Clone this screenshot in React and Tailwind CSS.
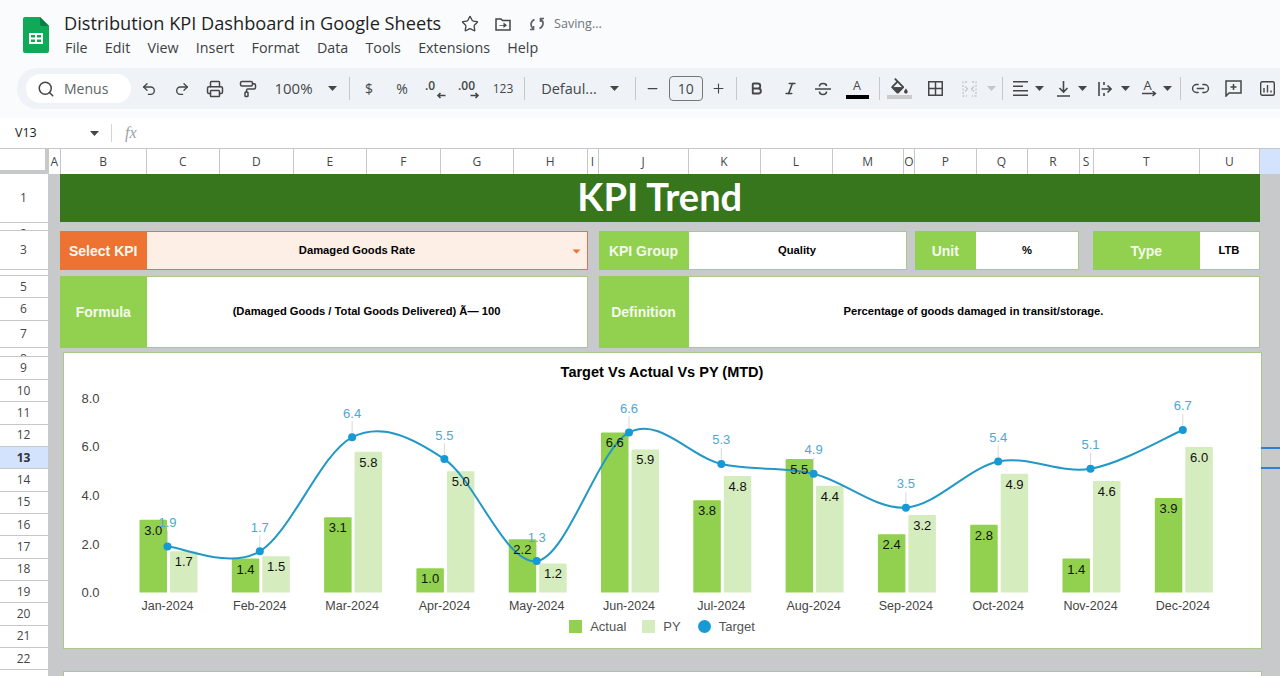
import { Search, Undo2, Redo2, Printer, PaintRoller, Star, Bold, Italic, Link2, Minus, Plus } from "lucide-react";

const menus = ["File", "Edit", "View", "Insert", "Format", "Data", "Tools", "Extensions", "Help"];

const columns = [
    { name: "A", w: "w-[12.5px]" },
    { name: "B", w: "w-[85.5px]" },
    { name: "C", w: "w-[73.5px]" },
    { name: "D", w: "w-[73.5px]" },
    { name: "E", w: "w-[73.5px]" },
    { name: "F", w: "w-[73.5px]" },
    { name: "G", w: "w-[73.5px]" },
    { name: "H", w: "w-[73.5px]" },
    { name: "I", w: "w-[11px]" },
    { name: "J", w: "w-[90px]" },
    { name: "K", w: "w-[72px]" },
    { name: "L", w: "w-[72px]" },
    { name: "M", w: "w-[71.5px]" },
    { name: "O", w: "w-[11px]" },
    { name: "P", w: "w-[61.5px]" },
    { name: "Q", w: "w-[51px]" },
    { name: "R", w: "w-[52px]" },
    { name: "S", w: "w-[14px]" },
    { name: "T", w: "w-[106.5px]" },
    { name: "U", w: "w-[59.5px]" },
];

// row 2, 4 and 8 are squeezed so the number gets clipped
const rows = [
    { n: 1, h: "h-[49px]" },
    { n: 2, h: "h-[8px]", clip: true },
    { n: 3, h: "h-[39px]" },
    { n: 4, h: "h-[6px]", clip: true },
    { n: 5, h: "h-[22px]" },
    { n: 6, h: "h-[23px]" },
    { n: 7, h: "h-[27px]" },
    { n: 8, h: "h-[9px]", clip: true },
    { n: 9, h: "h-[23px]" },
    ...[10, 11, 12, 13, 14, 15, 16, 17, 18, 19, 20, 21, 22, 23].map((n) => ({ n, h: "h-[22.33px]" })),
];

const months = [
    { label: "Jan-2024", actual: 3.0, py: 1.7, target: 1.9 },
    { label: "Feb-2024", actual: 1.4, py: 1.5, target: 1.7 },
    { label: "Mar-2024", actual: 3.1, py: 5.8, target: 6.4 },
    { label: "Apr-2024", actual: 1.0, py: 5.0, target: 5.5 },
    { label: "May-2024", actual: 2.2, py: 1.2, target: 1.3 },
    { label: "Jun-2024", actual: 6.6, py: 5.9, target: 6.6 },
    { label: "Jul-2024", actual: 3.8, py: 4.8, target: 5.3 },
    { label: "Aug-2024", actual: 5.5, py: 4.4, target: 4.9 },
    { label: "Sep-2024", actual: 2.4, py: 3.2, target: 3.5 },
    { label: "Oct-2024", actual: 2.8, py: 4.9, target: 5.4 },
    { label: "Nov-2024", actual: 1.4, py: 4.6, target: 5.1 },
    { label: "Dec-2024", actual: 3.9, py: 6.0, target: 6.7 },
];

const xOf = (i) => 167 + i * 92.3;
const yOf = (v) => 591.6 - v * 24.27;

function smoothPath(points) {
    let d = `M${points[0].x} ${points[0].y}`;
    for (let i = 0; i < points.length - 1; i++) {
        const p0 = points[Math.max(i - 1, 0)];
        const p1 = points[i];
        const p2 = points[i + 1];
        const p3 = points[Math.min(i + 2, points.length - 1)];
        const c1x = p1.x + (p2.x - p0.x) / 6;
        const c1y = p1.y + (p2.y - p0.y) / 6;
        const c2x = p2.x - (p3.x - p1.x) / 6;
        const c2y = p2.y - (p3.y - p1.y) / 6;
        d += ` C${c1x} ${c1y} ${c2x} ${c2y} ${p2.x} ${p2.y}`;
    }
    return d;
}

function Caret({ className = "" }) {
    return (
        <svg width="9" height="5" viewBox="0 0 9 5" className={className}>
            <path d="M0 0h9L4.5 5z" fill="currentColor" />
        </svg>
    );
}

function Box({ w, className = "", children }) {
    return <div className={`flex items-center justify-center shrink-0 h-full ${w} ${className}`}>{children}</div>;
}

function Sep({ className = "" }) {
    return <div className={`w-px h-[23px] bg-[#c7c7c7] shrink-0 ${className}`} />;
}

function SheetsLogo() {
    return (
        <svg width="26" height="36" viewBox="0 0 26 36" className="shrink-0">
            <path d="M2 0h15l9 9v25a2 2 0 0 1-2 2H2a2 2 0 0 1-2-2V2a2 2 0 0 1 2-2z" fill="#0fa958" />
            <path d="M17 0l9 9h-7a2 2 0 0 1-2-2z" fill="#0a7d41" />
            <path d="M6 16h14v11H6z M8 18v2.5h4V18z M14 18v2.5h4V18z M8 22.5V25h4v-2.5z M14 22.5V25h4v-2.5z" fill="#fff" fillRule="evenodd" />
        </svg>
    );
}

function Toolbar() {
    return (
        <div className="flex items-center h-[41px] ml-[17px] pl-[9px] bg-[#eff3f8] rounded-l-[20px] text-[#444746] overflow-hidden">
            <div className="flex items-center w-[105px] h-[29px] bg-white rounded-full shrink-0 pl-[11px]">
                <Search size={18} strokeWidth={2} />
                <span className="ml-[9px] text-[14px] text-[#5f6368]">Menus</span>
            </div>
            <Box w="w-[33px]" className="ml-[1px]"><Undo2 size={16} strokeWidth={2} /></Box>
            <Box w="w-[33px]"><Redo2 size={16} strokeWidth={2} /></Box>
            <Box w="w-[33px]"><Printer size={18} strokeWidth={2} /></Box>
            <Box w="w-[33px]"><PaintRoller size={18} strokeWidth={2} /></Box>
            <Box w="w-[59px]" className="text-[15px]">100%</Box>
            <Box w="w-[18px]"><Caret /></Box>
            <Sep className="ml-[8px]" />
            <Box w="w-[33px]" className="ml-[2.5px] text-[14px]">$</Box>
            <Box w="w-[33px]" className="text-[14px]">%</Box>
            <Box w="w-[33px]">
                <div className="relative w-[20px] h-[20px] text-[12px] font-semibold leading-[14px]">
                    .0
                    <svg width="10" height="7" viewBox="0 0 10 7" className="absolute right-[-1px] bottom-0">
                        <path d="M9.5 3.5H2M4.5 1 2 3.5 4.5 6" fill="none" stroke="currentColor" strokeWidth="1.6" />
                    </svg>
                </div>
            </Box>
            <Box w="w-[33px]" className="ml-[1px]">
                <div className="relative w-[22px] h-[20px] text-[12px] font-semibold leading-[14px]">
                    .00
                    <svg width="10" height="7" viewBox="0 0 10 7" className="absolute right-0 bottom-0">
                        <path d="M.5 3.5H8M5.5 1 8 3.5 5.5 6" fill="none" stroke="currentColor" strokeWidth="1.6" />
                    </svg>
                </div>
            </Box>
            <Box w="w-[33px]" className="ml-[1px] text-[12px]">123</Box>
            <Sep className="ml-[4.5px]" />
            <Box w="w-[56px]" className="ml-[16px] text-[14.5px] whitespace-nowrap">Defaul...</Box>
            <Box w="w-[18px]" className="ml-[8px]"><Caret /></Box>
            <Sep className="ml-[12px]" />
            <Box w="w-[24px]" className="ml-[4px]"><Minus size={15} strokeWidth={2} /></Box>
            <div className="flex items-center justify-center w-[34.5px] h-[25px] ml-[4.5px] shrink-0 border border-[#747775] rounded-[4px] text-[14px]">10</div>
            <Box w="w-[24px]" className="ml-[3px]"><Plus size={15} strokeWidth={1.8} /></Box>
            <Sep className="ml-[6px]" />
            <Box w="w-[33px]" className="ml-[2.5px]"><Bold size={15} strokeWidth={3} /></Box>
            <Box w="w-[33px]" className="ml-[1px]"><Italic size={15} strokeWidth={2.6} /></Box>
            <Box w="w-[33px]">
                <svg width="18" height="18" viewBox="0 0 18 18" fill="none" stroke="currentColor" strokeWidth="1.6">
                    <path d="M1 9h16M5.5 6.5C5.5 4.5 7 3.5 9 3.5s3.5 1 3.5 2.5M5.5 11.5c0 2 1.5 3 3.5 3s3.5-1 3.5-3" />
                </svg>
            </Box>
            <Box w="w-[33px]" className="ml-[1px]">
                <div className="flex flex-col items-center w-[24px]">
                    <span className="text-[12.5px] leading-[14px] h-[16px]">A</span>
                    <div className="w-[23px] h-[4px] bg-black" />
                </div>
            </Box>
            <Sep className="ml-[5px]" />
            <Box w="w-[33px]" className="ml-[3px]">
                <div className="flex flex-col items-center w-[25px]">
                    <svg width="19" height="16" viewBox="2 0 20 17.5" fill="currentColor">
                        <path d="M16.56 8.94 7.62 0 6.21 1.41l2.38 2.38-5.15 5.15c-.59.59-.59 1.54 0 2.12l5.5 5.5c.29.29.68.44 1.06.44s.77-.15 1.06-.44l5.5-5.5c.59-.58.59-1.53 0-2.12zM10 5.21 14.79 10H5.21z" />
                        <path d="M5 10h10l-5 5zM19 11.5s-2 2.17-2 3.5c0 1.1.9 2 2 2s2-.9 2-2c0-1.33-2-3.5-2-3.5z" />
                    </svg>
                    <div className="w-[25px] h-[4px] mt-[1px] bg-[#c9cbcd]" />
                </div>
            </Box>
            <Box w="w-[33px]" className="ml-[3px]">
                <svg width="15" height="15" viewBox="0 0 15 15" fill="none" stroke="currentColor" strokeWidth="1.5">
                    <path d="M.75.75h13.5v13.5H.75zM7.5.75v13.5M.75 7.5h13.5" />
                </svg>
            </Box>
            <Box w="w-[33px]" className="ml-[1px] text-[#c4c7c9]">
                <svg width="15" height="16" viewBox="0 0 15 16" fill="none" stroke="currentColor" strokeWidth="1.3" strokeDasharray="2 1.5">
                    <path d="M5 1H1v14h4M10 1h4v14h-4" />
                    <path d="M3 5.5 5.5 8 3 10.5M12 5.5 9.5 8 12 10.5" strokeDasharray="none" />
                </svg>
            </Box>
            <Box w="w-[11px]" className="text-[#c4c7c9]"><Caret /></Box>
            <Sep className="ml-[5.5px]" />
            <Box w="w-[20px]" className="ml-[7px]">
                <svg width="15" height="15" viewBox="0 0 15 15" fill="currentColor">
                    <path d="M0 0h15v1.5H0zM0 4.5h10V6H0zM0 9h15v1.5H0zM0 13.5h15V15H0z" />
                </svg>
            </Box>
            <Box w="w-[12px]" className="ml-[3px]"><Caret /></Box>
            <Box w="w-[20px]" className="ml-[8px]">
                <svg width="13" height="16" viewBox="0 0 13 16" fill="none" stroke="currentColor" strokeWidth="1.6">
                    <path d="M6.5 0v10.5M2.5 7l4 4 4-4M0 15h13" />
                </svg>
            </Box>
            <Box w="w-[12px]" className="ml-[3px]"><Caret /></Box>
            <Box w="w-[20px]" className="ml-[7px]">
                <svg width="14" height="14" viewBox="0 0 14 14" fill="none" stroke="currentColor" strokeWidth="1.6">
                    <path d="M1 0v14M6 0v3M6 11v3M3.5 7H13M9.5 3.5 13 7l-3.5 3.5" />
                </svg>
            </Box>
            <Box w="w-[12px]" className="ml-[4px]"><Caret /></Box>
            <Box w="w-[20px]" className="ml-[8px]">
                <div className="relative w-[15px] h-[18px]">
                    <span className="absolute left-[2px] top-[-2px] text-[13px] leading-[15px]">A</span>
                    <svg width="15" height="7" viewBox="0 0 15 7" className="absolute left-0 bottom-0" fill="none" stroke="currentColor" strokeWidth="1.4">
                        <path d="M0 2.5h13.5M10.5 0 13.5 2.5 10.5 5" />
                    </svg>
                </div>
            </Box>
            <Box w="w-[12px]" className="ml-[2px]"><Caret /></Box>
            <Sep className="ml-[7px]" />
            <Box w="w-[32px]" className="ml-[3px]"><Link2 size={19} strokeWidth={1.8} /></Box>
            <Box w="w-[32px]" className="ml-[1px]">
                <svg width="17" height="17" viewBox="0 0 17 17" fill="none" stroke="currentColor" strokeWidth="1.5">
                    <path d="M1 1h15v12H4l-3 3zM8.5 4v6M5.5 7h6" />
                </svg>
            </Box>
            <Box w="w-[32px]" className="ml-[2px]">
                <svg width="15" height="15" viewBox="0 0 15 15" fill="none" stroke="currentColor" strokeWidth="1.4">
                    <rect x=".7" y=".7" width="13.6" height="13.6" rx="1.5" />
                    <path d="M4 7v4.5M7.5 4v7.5M11 9.5v2" />
                </svg>
            </Box>
        </div>
    );
}

function Label({ w, children, tone = "bg-[#92d14f]" }) {
    return (
        <div className={`flex items-center justify-center shrink-0 h-full pt-[1px] ${w} ${tone} text-[14px] font-bold text-[#f4f9ec]`}>
            {children}
        </div>
    );
}

function Value({ w, children }) {
    return (
        <div className={`flex items-center justify-center shrink-0 h-full ${w} bg-white border border-l-0 border-[#a9c98b] text-[11.2px] font-bold text-black`}>
            {children}
        </div>
    );
}

function TrendChart() {
    const points = months.map((m, i) => ({ x: xOf(i), y: yOf(m.target) }));
    return (
        <svg width="1197" height="228" viewBox="63.5 385 1197 228" className="shrink-0 font-['Liberation_Sans',Arial,sans-serif]">
            {[0, 2, 4, 6, 8].map((v) => (
                <text key={v} x="81" y={yOf(v) + 4.5} fontSize="13" fill="#444">{v.toFixed(1)}</text>
            ))}
            {months.map((m, i) => {
                const c = xOf(i);
                const aTop = yOf(m.actual);
                const pTop = yOf(m.py);
                return (
                    <g key={m.label}>
                        <path d={`M${c - 28} 591.6V${aTop + 1}q0-1 1-1h25.5q1 0 1 1V591.6z`} fill="#92d14f" />
                        <path d={`M${c + 2.5} 591.6V${pTop + 1}q0-1 1-1h25.5q1 0 1 1V591.6z`} fill="#d5ecbe" />
                        <line x1={c} x2={c} y1={yOf(m.target) - 4} y2={yOf(m.target) - 16} stroke="#d9d9d9" />
                        <text x={c} y="608.5" fontSize="12.5" fill="#444" textAnchor="middle">{m.label}</text>
                    </g>
                );
            })}
            <path d={smoothPath(points)} fill="none" stroke="#2298c6" strokeWidth="2" />
            {points.map((p, i) => (
                <circle key={i} cx={p.x} cy={p.y} r="4" fill="#159ad6" />
            ))}
            {months.map((m, i) => {
                const c = xOf(i);
                return (
                    <g key={m.label} fontSize="13" textAnchor="middle">
                        <text x={c - 14.3} y={yOf(m.actual) + 15} fill="#111">{m.actual.toFixed(1)}</text>
                        <text x={c + 16.3} y={yOf(m.py) + 15} fill="#111">{m.py.toFixed(1)}</text>
                        <text x={c} y={yOf(m.target) - 19.5} fill="#4ea8d2">{m.target.toFixed(1)}</text>
                    </g>
                );
            })}
        </svg>
    );
}

export default function App() {
    return (
        <div className="relative flex flex-col w-[1280px] h-[676px] overflow-hidden bg-white font-['Open_Sans',sans-serif]">
            {/* top bar */}
            <div className="bg-[#f9fbfd] h-[118px] shrink-0">
                <div className="flex h-[68px] pl-[23px] pt-[17px]">
                    <SheetsLogo />
                    <div className="ml-[15px] -mt-[7px]">
                        <div className="flex items-center h-[28px]">
                            <span className="w-[397px] text-[18.2px] text-[#1f1f1f] whitespace-nowrap">Distribution KPI Dashboard in Google Sheets</span>
                            <Star size={18} strokeWidth={1.8} className="text-[#444746]" />
                            <svg width="16" height="14" viewBox="0 0 16 14" fill="none" className="ml-[16px] text-[#444746]">
                                <path d="M1 2h5l1.5 1.5H15V13H1z" stroke="currentColor" strokeWidth="1.5" />
                                <path d="M4.5 8h4V5.5L12 8.25 8.5 11V8.8h-4z" fill="currentColor" />
                            </svg>
                            <svg width="14" height="16" viewBox="0 0 14 16" fill="none" stroke="#5f6368" strokeWidth="1.7" className="ml-[19px]">
                                <path d="M4.5 3.5C2.5 4.5 1 6 1 8.5c0 2 1 3.5 2.5 4.5M3.5 10v3.5H0M9.5 12.5C11.5 11.5 13 10 13 7.500c0-2-1-3.500-2.500-4.500M10.500 6V2.500H14" />
                            </svg>
                            <span className="ml-[10px] text-[12.6px] text-[#70757a]">Saving...</span>
                        </div>
                        <div className="flex gap-[17.2px] pl-[1px] text-[14.3px] leading-[20px] text-[#3c4043]">
                            {menus.map((m) => <span key={m}>{m}</span>)}
                        </div>
                    </div>
                </div>
                <Toolbar />
            </div>

            {/* formula bar */}
            <div className="flex items-center h-[30px] shrink-0 bg-white text-[#444746]">
                <span className="w-[86px] pl-[15px] text-[12.5px] text-[#222]">V13</span>
                <Caret className="ml-[3.5px]" />
                <div className="w-px h-[18px] ml-[12.5px] bg-[#d4d4d4]" />
                <span className="ml-[13px] text-[16px] italic text-[#9aa0a6] font-['Liberation_Serif',serif]">fx</span>
            </div>

            {/* column letters */}
            <div className="flex h-[26px] shrink-0 border-t border-[#c7c7c7] text-[12px] text-[#444746]">
                <div className="w-[48.5px] shrink-0 bg-white border-r-4 border-b-4 border-[#c7c8ca]" />
                {columns.map((c) => (
                    <div key={c.name} className={`flex items-center justify-center shrink-0 ${c.w} border-r border-[#c7c7c7]`}>{c.name}</div>
                ))}
                <div className="flex-1 bg-[#d3e3fd]" />
            </div>

            <div className="flex flex-1 min-h-0">
                {/* row numbers */}
                <div className="flex flex-col w-[48px] shrink-0 bg-white text-[12px] text-[#444746]">
                    {rows.map((r) => (
                        <div
                            key={r.n}
                            className={`flex justify-center shrink-0 overflow-hidden border-b border-[#c7c7c7] pr-[1px] ${r.h} ${r.clip ? "items-start pt-[4px] leading-[14px]" : "items-center"} ${r.n === 13 ? "bg-[#d3e3fd] font-bold text-[#303134]" : ""}`}
                        >
                            {r.n}
                        </div>
                    ))}
                </div>

                {/* dashboard */}
                <div className="flex-1 min-w-0 bg-[#c8c9cb] pl-[12px] font-['Liberation_Sans',Arial,sans-serif]">
                    <div className="flex items-center justify-center w-[1199.5px] h-[48px] pb-[3px] bg-[#38761d] text-[38px] font-bold text-white font-['Lato',sans-serif]">
                        KPI Trend
                    </div>

                    <div className="flex w-[1199.5px] h-[39px] mt-[9px]">
                        <Label w="w-[86.5px]" tone="bg-[#ed7333]">Select KPI</Label>
                        <div className="relative flex items-center justify-center shrink-0 w-[441px] h-full pr-[19px] bg-[#fdeee6] border border-l-0 border-[#e0754a] text-[11.2px] font-bold text-black">
                            Damaged Goods Rate
                            <Caret className="absolute right-[6px] top-[17px] text-[#ed7333] scale-90" />
                        </div>
                        <Label w="w-[90px] ml-[11px]">KPI Group</Label>
                        <Value w="w-[218px]">Quality</Value>
                        <Label w="w-[61.5px] ml-[8px]">Unit</Label>
                        <Value w="w-[103px]">%</Value>
                        <Label w="w-[106.5px] ml-[14px]">Type</Label>
                        <Value w="w-[60px]">LTB</Value>
                    </div>

                    <div className="flex w-[1199.5px] h-[71.5px] mt-[6px]">
                        <Label w="w-[86.5px]">Formula</Label>
                        <Value w="w-[441px]">(Damaged Goods / Total Goods Delivered) Ã— 100</Value>
                        <Label w="w-[90px] ml-[11px]">Definition</Label>
                        <Value w="w-[571px]">Percentage of goods damaged in transit/storage.</Value>
                    </div>

                    <div className="flex flex-col w-[1199px] h-[297px] ml-[2.5px] mt-[4.5px] bg-white border border-[#a9c98b]">
                        <div className="flex items-center justify-center h-[25.5px] mt-[7px] text-[14.5px] font-bold text-black shrink-0">
                            Target Vs Actual Vs PY (MTD)
                        </div>
                        <TrendChart />
                        <div className="flex items-center justify-center h-[26px] text-[13px] text-[#555]">
                            <div className="w-[13px] h-[13px] bg-[#92d14f]" />
                            <span className="ml-[8px]">Actual</span>
                            <div className="w-[13px] h-[13px] ml-[16px] bg-[#d5ecbe]" />
                            <span className="ml-[8px]">PY</span>
                            <div className="w-[13px] h-[13px] ml-[17px] rounded-full bg-[#159ad6]" />
                            <span className="ml-[8px]">Target</span>
                        </div>
                    </div>

                    <div className="w-[1199px] h-[60px] ml-[2.5px] mt-[21.5px] bg-white border border-[#a9c98b]" />
                </div>
            </div>

            {/* selected cell V13 */}
            <div className="absolute left-[1261px] top-[446.5px] w-[19px] h-[22px] border-y-2 border-[#2f7fd6]" />
        </div>
    );
}
